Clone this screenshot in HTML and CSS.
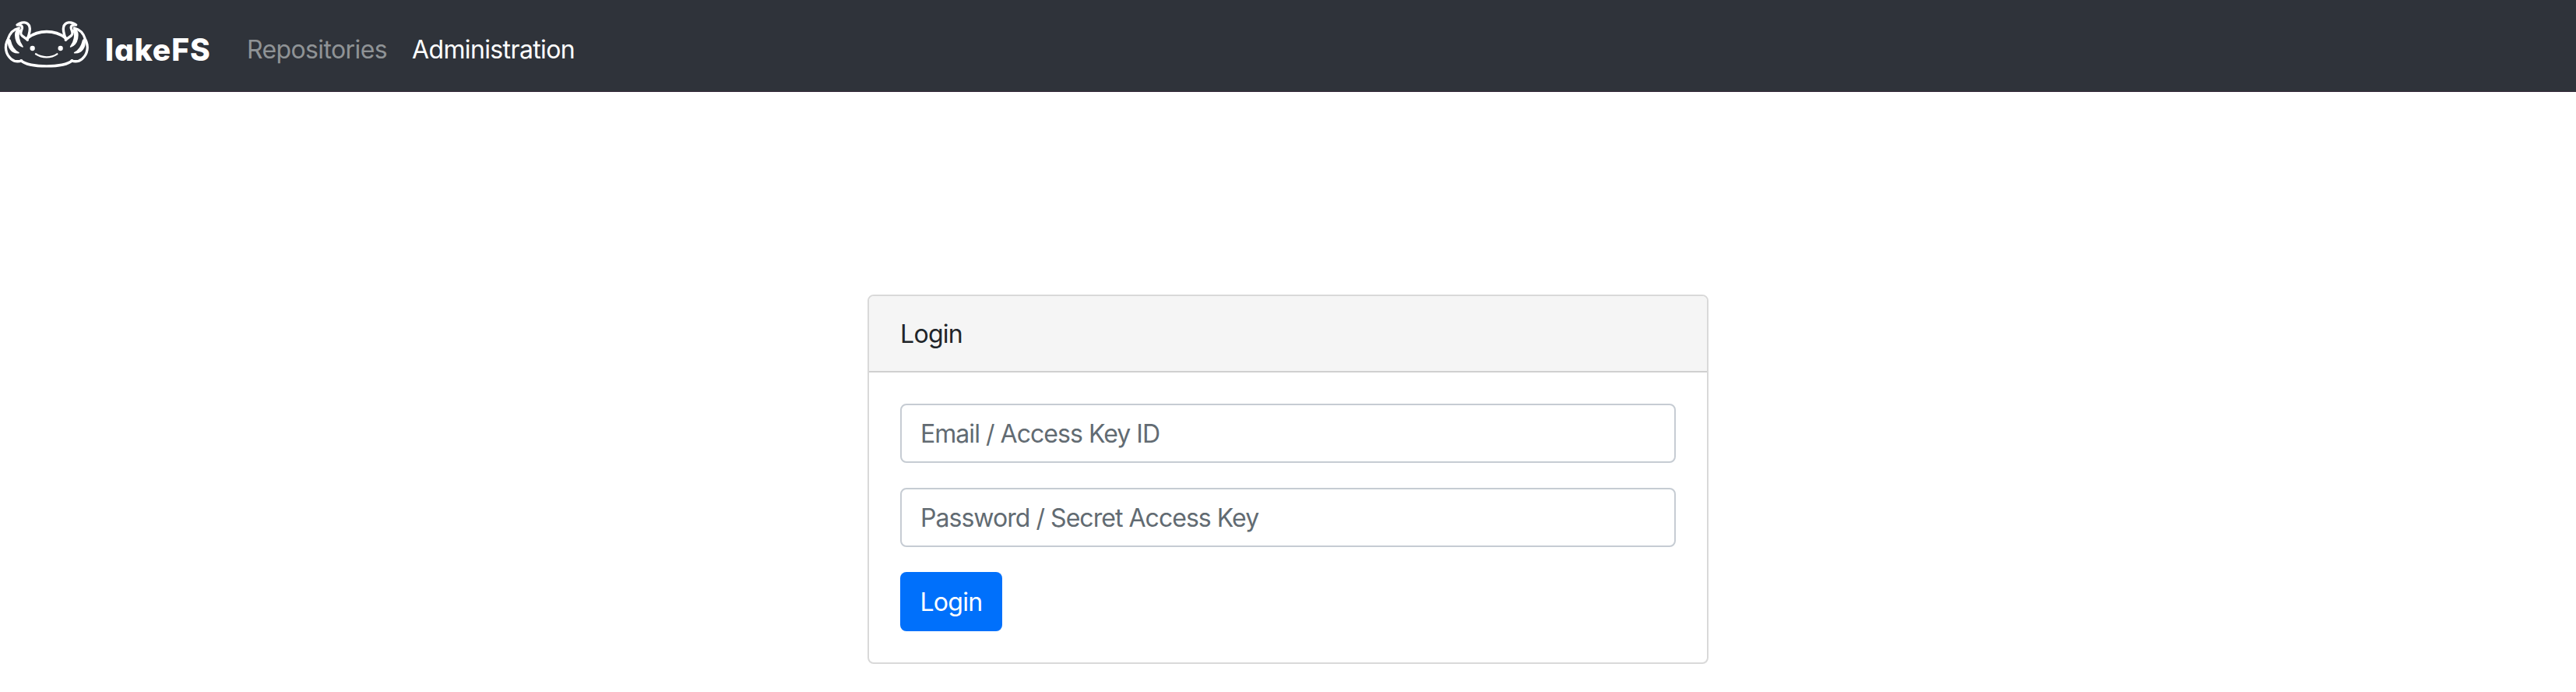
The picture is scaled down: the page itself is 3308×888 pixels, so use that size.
FILE: index.html
```html
<!DOCTYPE html>
<html lang="en">
<head>
<meta charset="utf-8">
<title>lakeFS</title>
<link rel="stylesheet" href="styles.css">
</head>
<body>
<nav class="navbar">
  <a class="brand" href="#">
    <svg class="brand-logo" viewBox="0 60 390 216" fill="none" stroke="#fff" stroke-linecap="round" stroke-linejoin="round">
      <defs>
        <g id="gills">
          <path stroke-width="10" d="M106 150C112 133 118 118 114 104C109 84 84 81 66 96C78 94 87 99 85 109C83 117 78 122 81 132C84 141 97 144 106 154"/>
          <path stroke-width="10" d="M73 108C52 113 37 130 31 150C16 178 21 209 43 227C55 237 70 238 83 234"/>
          <path fill="#fff" stroke-width="5" d="M70 108C51 128 59 171 87 180C72 160 66 132 78 119Z"/>
          <path fill="#fff" stroke-width="5" d="M32 150C29 183 45 206 72 203C53 194 44 178 39 155Z"/>
        </g>
      </defs>
      <use href="#gills"/>
      <use href="#gills" transform="matrix(-1 0 0 1 359 0)"/>
      <path stroke-width="11" d="M106 146C150 114 210 114 253 146"/>
      <path stroke-width="10" d="M81 233C112 262 247 262 278 233"/>
      <path stroke-width="7" d="M138 208C162 224 197 224 220 208"/>
      <circle cx="125" cy="186" r="9.5" fill="#fff" stroke="none"/>
      <circle cx="233" cy="186" r="9.5" fill="#fff" stroke="none"/>
    </svg>
    <span class="brand-name">lakeFS</span>
  </a>
  <a class="nav-link" href="#">Repositories</a>
  <a class="nav-link active" href="#">Administration</a>
</nav>
<main class="page">
  <section class="card">
    <header class="card-header">Login</header>
    <form class="card-body">
      <input class="field" type="text" placeholder="Email / Access Key ID">
      <input class="field" type="password" placeholder="Password / Secret Access Key">
      <button class="submit" type="button">Login</button>
    </form>
  </section>
</main>
</body>
</html>
```
FILE: styles.css
```css
* { box-sizing: border-box; }
body {
  margin: 0;
  background: #fff;
  color: #212529;
  font: 430 32px/48px Inter, "Liberation Sans", sans-serif;
  letter-spacing: -0.7px;
}
.navbar {
  display: flex;
  align-items: center;
  height: 118px;
  padding-top: 8px;
  background: #2f333a;
  border-bottom: 1px solid #35283a;
}
.brand {
  display: flex;
  align-items: center;
  width: 301px;
  color: #fff;
  text-decoration: none;
}
.brand-logo {
  width: 130px;
  height: 72px;
  margin: -13px 5px 0 0;
}
.brand-name {
  padding-top: 2px;
  font-weight: 800;
  font-size: 39px;
  font-feature-settings: "cv11";
  letter-spacing: 0.9px;
}
.nav-link {
  padding: 2px 16px 0;
  color: #8f9396;
  letter-spacing: -0.62px;
  text-decoration: none;
}
.nav-link.active { color: #fff; }
.page {
  display: flex;
  justify-content: center;
  padding-top: 260px;
}
.card {
  width: 1080px;
  height: 474px;
  border: 2px solid #d9d9d9;
  border-radius: 8px;
  overflow: hidden;
}
.card-header {
  height: 98px;
  padding: 25px 40px 23px;
  background: #f5f5f5;
  border-bottom: 2px solid #d0d0d0;
}
.card-body {
  display: flex;
  flex-direction: column;
  align-items: flex-start;
  gap: 32px;
  padding: 40px;
}
.field {
  width: 100%;
  height: 76px;
  padding: 12px 24px;
  border: 2px solid #c6ccd3;
  border-radius: 8px;
  background: #fff;
  font: inherit;
  letter-spacing: -0.96px;
}
.field::placeholder { color: #626b72; opacity: 1; }
.submit {
  width: 131px;
  height: 76px;
  padding: 2px 0 0;
  border: 0;
  border-radius: 8px;
  background: #0070fb;
  color: #fff;
  font: inherit;
  letter-spacing: inherit;
}
```
